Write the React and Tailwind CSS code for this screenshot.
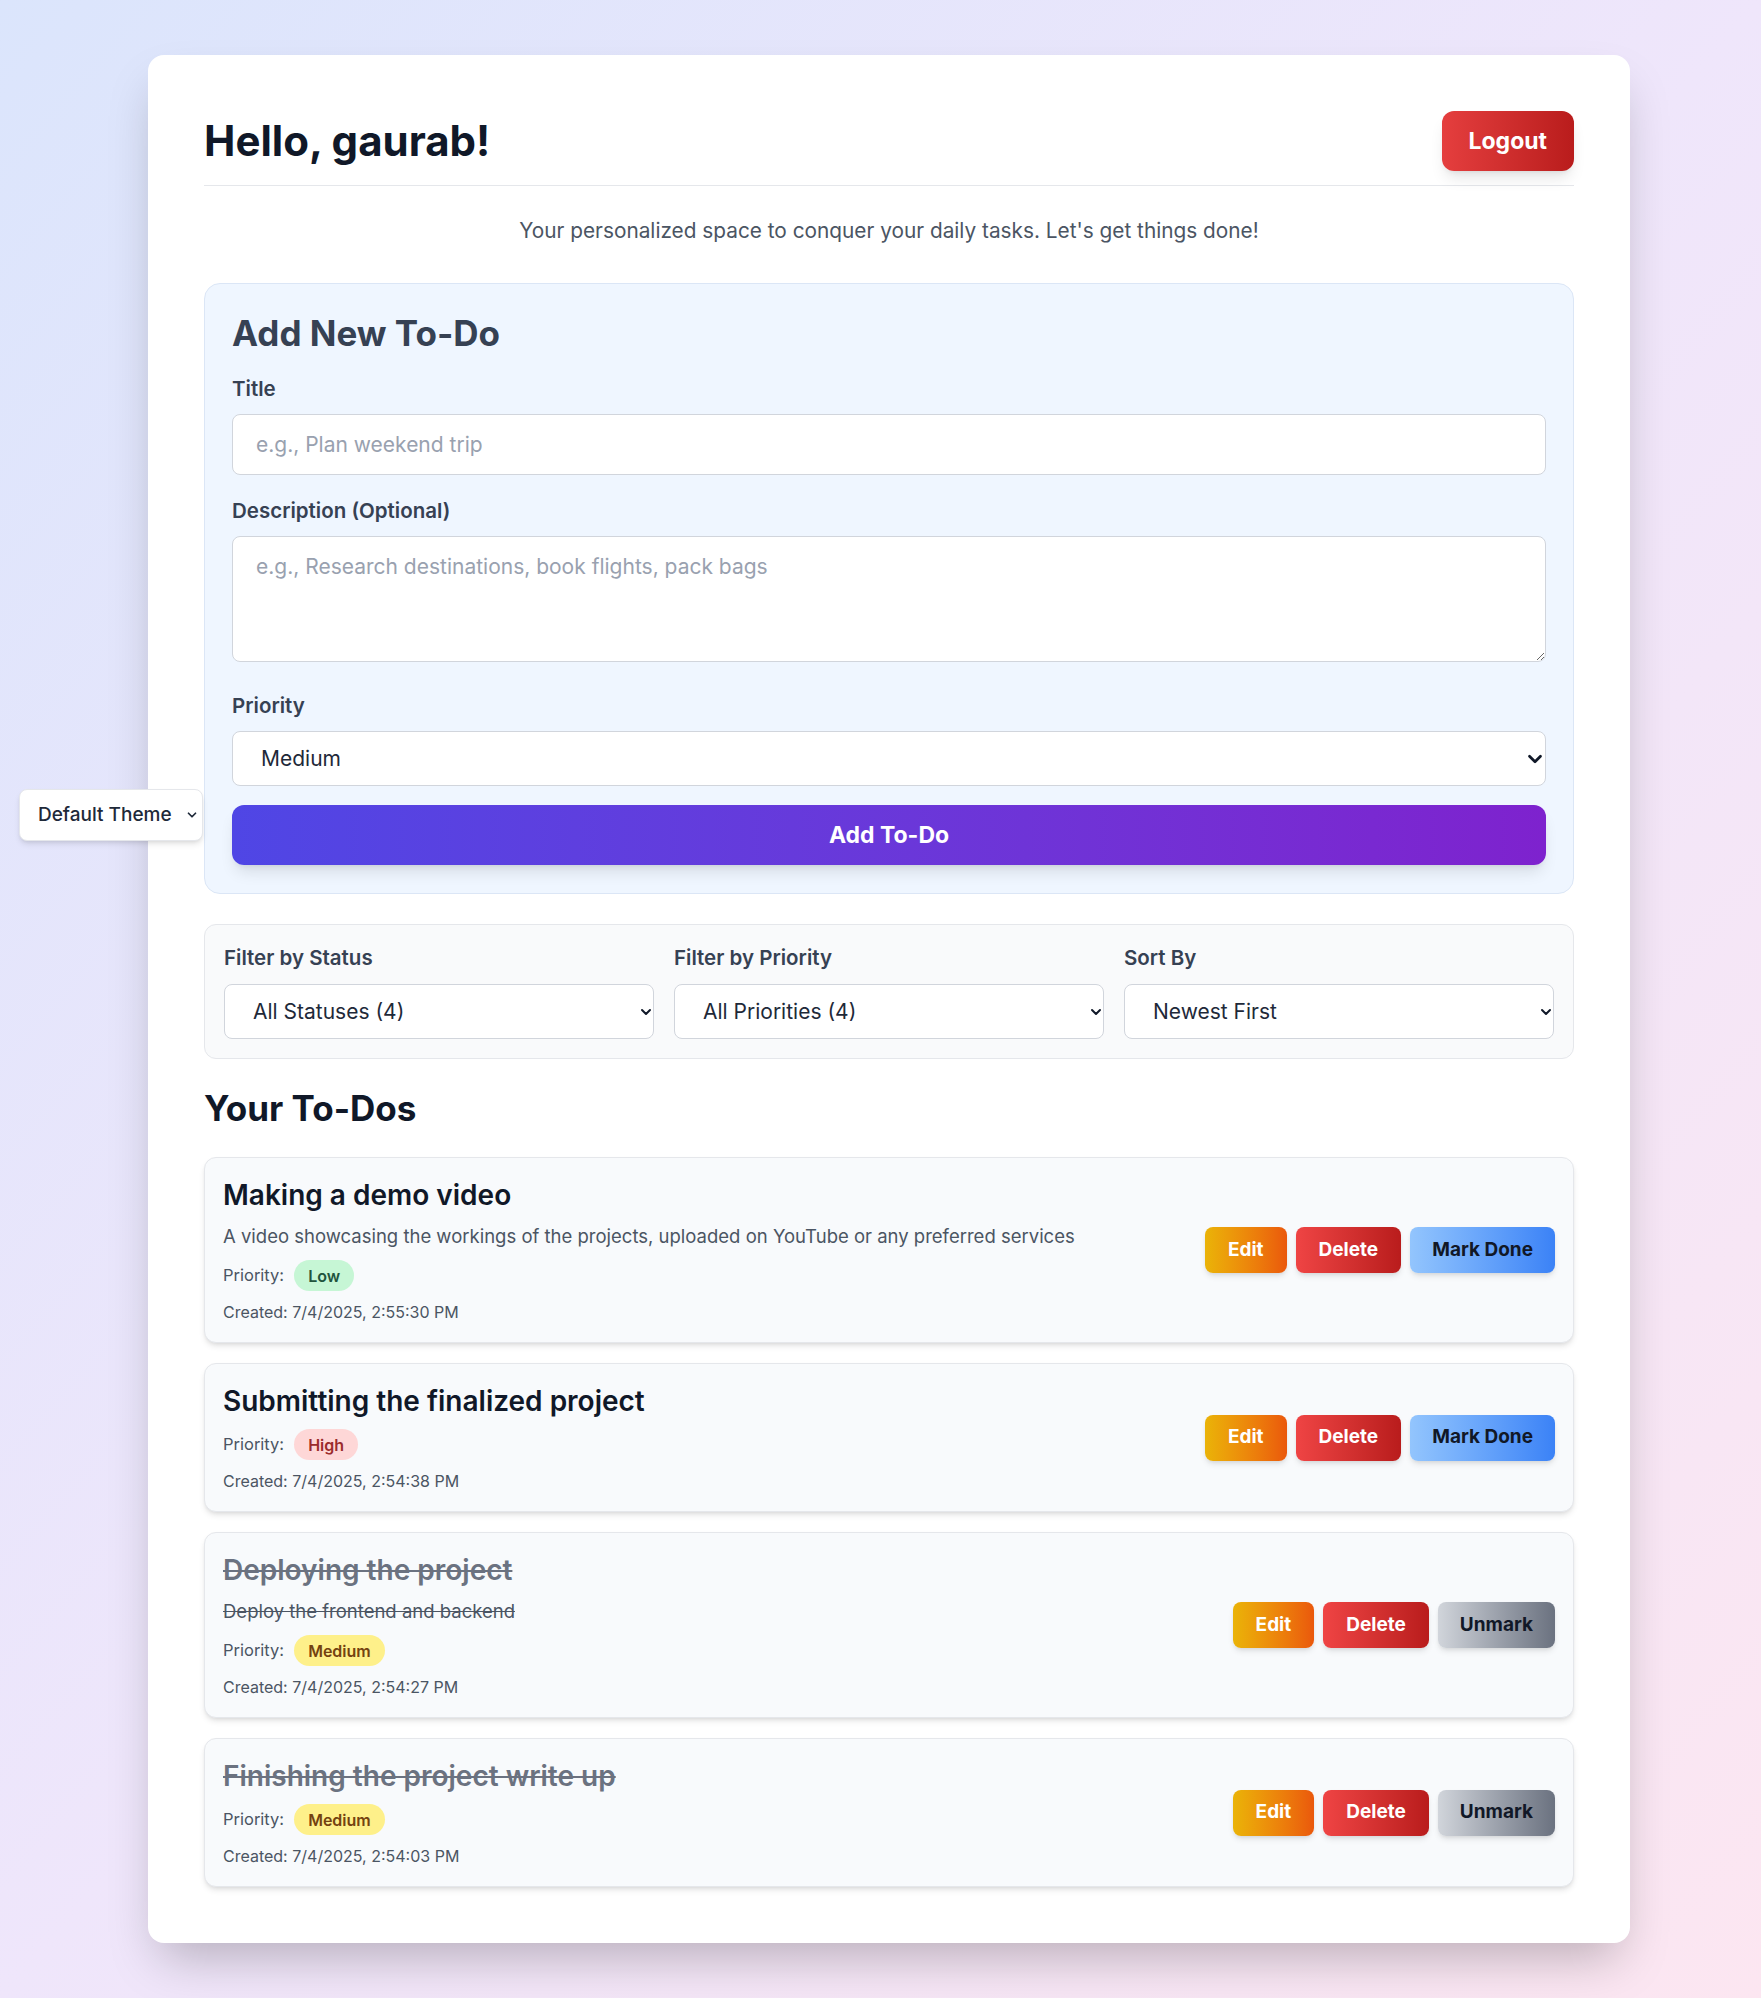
import React from 'react';

// Sample data for the to-do list
const todos = [
  {
    id: 1,
    title: 'Making a demo video',
    description: 'A video showcasing the workings of the projects, uploaded on YouTube or any preferred services',
    priority: 'Low',
    created: '7/4/2025, 2:55:30 PM',
    done: false,
  },
  {
    id: 2,
    title: 'Submitting the finalized project',
    description: '',
    priority: 'High',
    created: '7/4/2025, 2:54:38 PM',
    done: false,
  },
  {
    id: 3,
    title: 'Deploying the project',
    description: 'Deploy the frontend and backend',
    priority: 'Medium',
    created: '7/4/2025, 2:54:27 PM',
    done: true,
  },
  {
    id: 4,
    title: 'Finishing the project write up',
    description: '',
    priority: 'Medium',
    created: '7/4/2025, 2:54:03 PM',
    done: true,
  },
];

const badgeStyles = {
  Low: 'bg-[#c6f6d5] text-[#22543d]',
  High: 'bg-[#fed7d7] text-[#9b2c2c]',
  Medium: 'bg-[#fef08a] text-[#744210]',
};

function Chevron({ className }) {
  return (
    <svg viewBox="0 0 24 24" fill="none" stroke="currentColor" strokeWidth={3} strokeLinecap="round" strokeLinejoin="round" className={className}>
      <path d="M6 9l6 6 6-6" />
    </svg>
  );
}

function SelectBox({ value, options, big }) {
  return (
    <div className="relative">
      <select
        defaultValue={value}
        className="block h-[55px] w-full appearance-none rounded-lg border border-gray-300 bg-white pl-[28px] pr-8 text-[21px] text-gray-800 outline-none"
      >
        {options.map((o) => (
          <option key={o}>{o}</option>
        ))}
      </select>
      <Chevron
        className={`pointer-events-none absolute right-0 top-1/2 -translate-y-1/2 text-gray-900 ${
          big ? 'h-[22px] w-[22px]' : 'h-[16px] w-[16px]'
        }`}
      />
    </div>
  );
}

function TodoCard({ todo }) {
  return (
    <div className="flex items-center justify-between gap-6 rounded-xl border border-gray-200 bg-[#f8fafc] px-[18px] py-[19px] shadow-md">
      <div className="flex flex-col">
        <h3
          className={`text-[28px] font-semibold leading-[36px] ${
            todo.done ? 'text-[#6b7280] line-through' : 'text-gray-900'
          }`}
        >
          {todo.title}
        </h3>
        <div className="mt-[10px] flex flex-col gap-[10px]">
          {todo.description && (
            <p className={`text-[18.5px] leading-[27px] text-[#4b5563] ${todo.done ? 'line-through' : ''}`}>
              {todo.description}
            </p>
          )}
          <div className="flex h-[31px] items-center gap-[10px] text-[16.5px] text-[#4b5563]">
            <span>Priority:</span>
            <span className={`flex h-[31px] items-center rounded-full px-[14px] text-[16px] font-semibold ${badgeStyles[todo.priority]}`}>
              {todo.priority}
            </span>
          </div>
          <p className="text-[16px] leading-[22px] text-[#4b5563]">Created: {todo.created}</p>
        </div>
      </div>
      <div className="flex shrink-0 items-center gap-[9px]">
        <button className="h-[46px] rounded-lg bg-linear-to-r from-[#eab308] to-[#ea580c] px-[23px] text-[19px] font-bold text-white shadow-md">
          Edit
        </button>
        <button className="h-[46px] rounded-lg bg-linear-to-r from-[#ef4444] to-[#b91c1c] px-[23px] text-[19px] font-bold text-white shadow-md">
          Delete
        </button>
        {todo.done ? (
          <button className="h-[46px] rounded-lg bg-linear-to-r from-[#d1d5db] to-[#6b7280] px-[22px] text-[19px] font-bold text-[#111827] shadow-md">
            Unmark
          </button>
        ) : (
          <button className="h-[46px] rounded-lg bg-linear-to-r from-[#93c5fd] to-[#3b82f6] px-[22px] text-[19px] font-bold text-[#111827] shadow-md">
            Mark Done
          </button>
        )}
      </div>
    </div>
  );
}

export default function App() {
  return (
    <div className="relative min-h-screen bg-linear-to-br from-[#dbe5fc] via-[#efe6fb] to-[#fce6f1] py-[55px] font-['Inter',sans-serif]">
      {/* Theme picker floating on the left */}
      <div className="absolute left-[19px] top-[789px] z-10">
        <select
          defaultValue="Default Theme"
          className="block h-[52px] w-[184px] appearance-none rounded-lg border border-gray-200 bg-white pl-[18px] text-[19px] font-medium text-gray-800 shadow-md outline-none"
        >
          <option>Default Theme</option>
          <option>Dark Theme</option>
        </select>
        <Chevron className="pointer-events-none absolute right-[4px] top-1/2 h-[14px] w-[14px] -translate-y-1/2 text-gray-800" />
      </div>

      <div className="ml-[148px] w-[1482px] rounded-2xl bg-white p-14 shadow-2xl">
        {/* Header */}
        <div className="flex items-center justify-between border-b border-gray-200 pb-[14px]">
          <h1 className="text-[42px] font-bold leading-[60px] text-gray-900">Hello, gaurab!</h1>
          <button className="h-[60px] rounded-xl bg-linear-to-r from-[#e53e3e] to-[#b91c1c] px-[27px] text-[23px] font-bold text-white shadow-lg">
            Logout
          </button>
        </div>

        <p className="mt-[31px] text-center text-[20.8px] leading-7 text-[#4b5563]">
          Your personalized space to conquer your daily tasks. Let's get things done!
        </p>

        {/* Add new to-do form */}
        <div className="mt-[38px] rounded-2xl border border-[#dbe6f6] bg-[#eff6ff] px-[27px] pb-[28px] pt-[27px]">
          <h2 className="pt-[2px] text-[35px] font-bold leading-[40px] text-gray-700">Add New To-Do</h2>

          <div className="mt-[22px]">
            <label className="mb-[11px] block text-[20.5px] font-semibold leading-[28px] text-gray-700">Title</label>
            <input
              type="text"
              placeholder="e.g., Plan weekend trip"
              className="block h-[61px] w-full rounded-lg border border-gray-300 bg-white px-[23px] text-[21px] text-gray-800 outline-none placeholder:text-gray-400"
            />
          </div>

          <div className="mt-[22px]">
            <label className="mb-[11px] block text-[20.5px] font-semibold leading-[28px] text-gray-700">Description (Optional)</label>
            <textarea
              placeholder="e.g., Research destinations, book flights, pack bags"
              className="block h-[126px] w-full rounded-lg border border-gray-300 bg-white px-[23px] py-[15px] text-[21px] leading-[30px] text-gray-800 outline-none placeholder:text-gray-400"
            />
          </div>

          <div className="mt-[30px]">
            <label className="mb-[11px] block text-[20.5px] font-semibold leading-[28px] text-gray-700">Priority</label>
            <SelectBox value="Medium" options={['Low', 'Medium', 'High']} big />
          </div>

          <button className="mt-[19px] h-[60px] w-full rounded-xl bg-linear-to-r from-[#4f46e5] to-[#7e22ce] text-[23px] font-bold text-white shadow-lg">
            Add To-Do
          </button>
        </div>

        {/* Filters */}
        <div className="mt-[30px] grid grid-cols-3 gap-5 rounded-xl border border-gray-200 bg-gray-50 p-[19px]">
          <div>
            <label className="mb-3 block text-[20.5px] font-semibold leading-[28px] text-gray-700">Filter by Status</label>
            <SelectBox value="All Statuses (4)" options={['All Statuses (4)', 'Active (2)', 'Completed (2)']} />
          </div>
          <div>
            <label className="mb-3 block text-[20.5px] font-semibold leading-[28px] text-gray-700">Filter by Priority</label>
            <SelectBox value="All Priorities (4)" options={['All Priorities (4)', 'Low (1)', 'Medium (2)', 'High (1)']} />
          </div>
          <div>
            <label className="mb-3 block text-[20.5px] font-semibold leading-[28px] text-gray-700">Sort By</label>
            <SelectBox value="Newest First" options={['Newest First', 'Oldest First', 'Priority']} />
          </div>
        </div>

        <h2 className="mt-[29px] text-[35px] font-bold leading-[40px] text-gray-900">Your To-Dos</h2>

        <div className="mt-[29px] space-y-5">
          {todos.map((todo) => (
            <TodoCard key={todo.id} todo={todo} />
          ))}
        </div>
      </div>
    </div>
  );
}
